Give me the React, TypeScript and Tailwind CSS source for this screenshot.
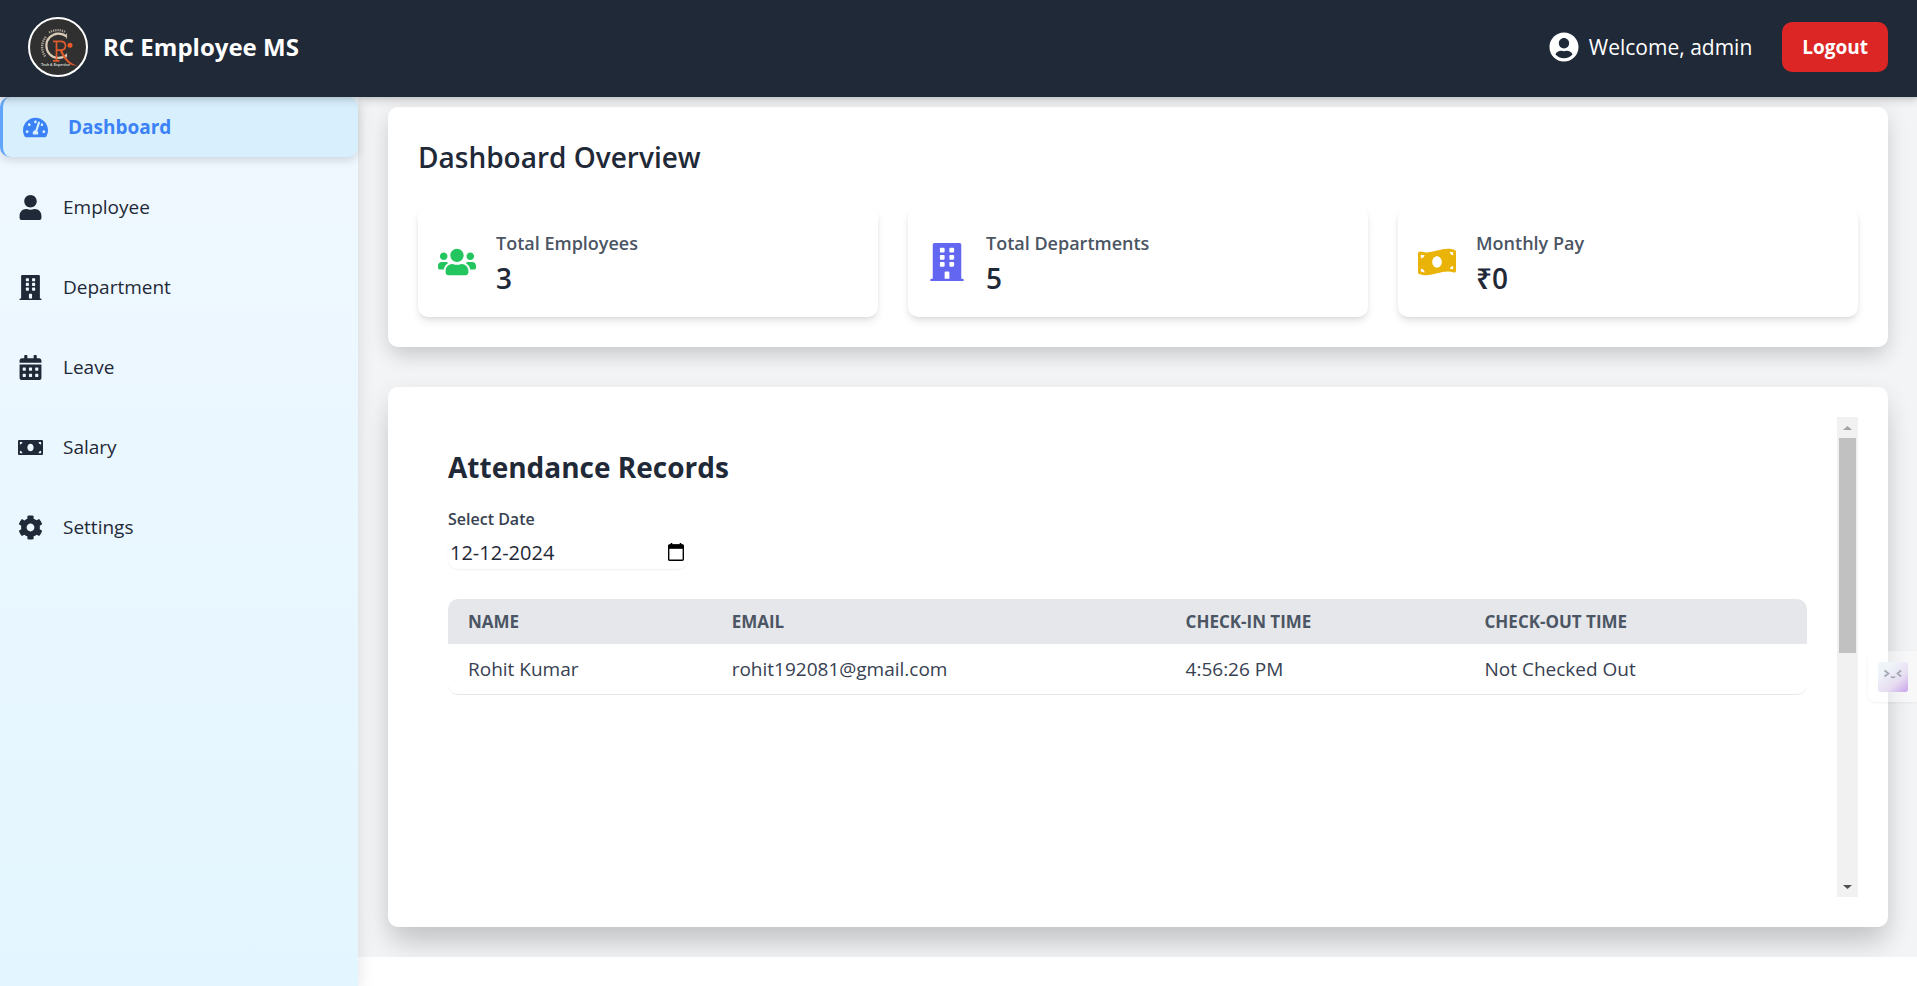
import React from "react";
import type { IconType } from "react-icons";
import {
  FaBuilding,
  FaCalendarAlt,
  FaCog,
  FaMoneyBill,
  FaMoneyBillWave,
  FaTachometerAlt,
  FaUser,
  FaUserCircle,
  FaUsers,
} from "react-icons/fa";

const navItems: { label: string; icon: IconType; active?: boolean }[] = [
  { label: "Dashboard", icon: FaTachometerAlt, active: true },
  { label: "Employee", icon: FaUser },
  { label: "Department", icon: FaBuilding },
  { label: "Leave", icon: FaCalendarAlt },
  { label: "Salary", icon: FaMoneyBill },
  { label: "Settings", icon: FaCog },
];

const stats: { label: string; value: string; icon: IconType; color: string }[] = [
  { label: "Total Employees", value: "3", icon: FaUsers, color: "text-[#22c55e]" },
  { label: "Total Departments", value: "5", icon: FaBuilding, color: "text-[#6366f1]" },
  { label: "Monthly Pay", value: "₹0", icon: FaMoneyBillWave, color: "text-[#eab308]" },
];

const records = [
  { name: "Rohit Kumar", email: "rohit192081@gmail.com", checkIn: "4:56:26 PM", checkOut: "Not Checked Out" },
];

function Logo() {
  return (
    <svg viewBox="0 0 60 60" className="size-[60px] shrink-0" role="img" aria-label="RC logo">
      <circle cx="30" cy="30" r="29" fill="#303030" stroke="#fff" strokeWidth="2" />
      <path d="M38.500 19.500A12.200 12.200 0 1 0 38.500 38" fill="none" stroke="#d9cbb8" strokeWidth="2.200" />
      <path d="M38.600 16.500V21.500M38.600 36.500V40.500" stroke="#d9cbb8" strokeWidth="0.900" />
      <path d="M17.200 39.500A15.800 15.800 0 0 1 18.200 19.500" fill="none" stroke="#a89e90" strokeWidth="2.400" strokeDasharray="1.300 0.900" />
      <path d="M21 15.600A17 17 0 0 1 37.500 15" fill="none" stroke="#a89e90" strokeWidth="2.400" strokeDasharray="1.300 0.900" />
      <path
        d="M25 24.300H32.500C36 24.300 37.500 26.200 37.500 28.800S36 33.200 32.500 33.200H29M28.500 24.300V43.500M25 43.800H31.500"
        fill="none"
        stroke="#df5b2c"
        strokeWidth="1.700"
      />
      <path d="M31.500 33L34 33C37.500 41 42 47 49.500 48.400C42 49.800 36 43.500 31.500 33Z" fill="#df5b2c" />
      <circle cx="42" cy="28.200" r="2.500" fill="#ea5a26" />
      <text x="13" y="49.300" fontSize="3.600" fontWeight="700" fill="#d6d6d6" fontFamily="Liberation Sans, sans-serif">
        Tech &amp; Expertise
      </text>
    </svg>
  );
}

function Header() {
  return (
    <header className="relative z-10 flex items-center justify-between bg-[#1f2937] pt-[17px] pr-[29px] pb-5 pl-7 text-white shadow-[0_5px_8px_rgba(0,0,0,0.1),0_2px_4px_rgba(0,0,0,0.1)]">
      <div className="flex items-center gap-[15px]">
        <Logo />
        <h1 className="text-[24px] leading-8 font-bold">RC Employee MS</h1>
      </div>
      <div className="flex items-center gap-[30px]">
        <div className="flex items-center gap-2.5">
          <FaUserCircle className="size-[30px]" />
          <span className="text-[21px] leading-8">Welcome, admin</span>
        </div>
        <button type="button" className="h-[50px] rounded-[10px] bg-[#dc2626] px-5 text-[19px] font-bold">
          Logout
        </button>
      </div>
    </header>
  );
}

function Sidebar() {
  return (
    <aside className="z-[1] w-[358px] shrink-0 bg-linear-to-b from-[#f0f8ff] to-[#e3f6ff] shadow-[0_4px_16px_rgba(0,0,0,0.12)]">
      <nav className="flex flex-col gap-5">
        {navItems.map(({ label, icon: Icon, active }) => (
          <a
            key={label}
            href={"#" + label.toLowerCase()}
            className={
              active
                ? "flex h-[60px] items-center gap-5 rounded-[10px] border-l-[3px] border-[#60a5fa] bg-[#d8effe] pl-5 text-[19px] font-bold text-[#3b82f6] shadow-[0_4px_8px_rgba(0,0,0,0.12)]"
                : "flex h-[60px] items-center gap-5 rounded-[10px] pl-[18px] text-[19px] text-[#1f2937]"
            }
          >
            <Icon className="size-[25px]" />
            {label}
          </a>
        ))}
      </nav>
    </aside>
  );
}

function Overview() {
  return (
    <section className="rounded-[10px] bg-white p-[30px] shadow-[0_12px_19px_-4px_rgba(0,0,0,0.1),0_5px_24px_rgba(0,0,0,0.1)]">
      <h2 className="mb-[30px] text-[28px] leading-10 font-semibold text-[#1f2937]">Dashboard Overview</h2>
      <div className="grid grid-cols-3 gap-[30px]">
        {stats.map(({ label, value, icon: Icon, color }) => (
          <div
            key={label}
            className="flex h-[110px] items-center gap-5 rounded-[10px] bg-white px-5 shadow-[0_5px_8px_-1px_rgba(0,0,0,0.1),0_2px_5px_-2px_rgba(0,0,0,0.1)]"
          >
            <Icon className={"size-[38px] " + color} />
            <div className="pb-0.5">
              <h3 className="text-[18px] leading-[35px] font-semibold text-[#4b5563]">{label}</h3>
              <p className="text-[28px] leading-[35px] font-semibold text-[#1f2937]">{value}</p>
            </div>
          </div>
        ))}
      </div>
    </section>
  );
}

function ScrollTrack() {
  return (
    <div className="flex w-[21px] shrink-0 flex-col items-center bg-[#f1f1f1]" aria-hidden="true">
      <div className="flex h-[21px] items-center">
        <svg viewBox="0 0 9 4" className="h-1 w-[9px]">
          <path d="M4.500 0L9 4H0Z" fill="#a3a3a3" />
        </svg>
      </div>
      <div className="flex w-[17px] grow flex-col">
        <div className="h-[49%] bg-[#c1c1c1]" />
      </div>
      <div className="flex h-[21px] items-center">
        <svg viewBox="0 0 9 4" className="h-1 w-[9px]">
          <path d="M0 0H9L4.500 4Z" fill="#505050" />
        </svg>
      </div>
    </div>
  );
}

function Attendance() {
  return (
    <section className="rounded-[10px] bg-white p-[30px] shadow-[0_25px_32px_-6px_rgba(0,0,0,0.1),0_10px_24px_rgba(0,0,0,0.12)]">
      <div className="flex min-h-[480px]">
        <div className="min-w-0 grow p-[30px]">
          <h2 className="mb-5 text-[28px] leading-10 font-bold text-[#1f2937]">Attendance Records</h2>
          <label htmlFor="attendance-date" className="block text-[16px] leading-[25px] font-semibold text-[#374151]">
            Select Date
          </label>
          <div className="mt-1 flex h-[33px] w-60 items-center rounded-[10px] bg-white pr-1 pl-0.5 shadow-[0_1px_2px_rgba(0,0,0,0.06)]">
            <input
              id="attendance-date"
              type="text"
              defaultValue="12-12-2024"
              className="w-0 grow bg-transparent text-[20px] text-[#1f2937] outline-none"
            />
            <button type="button" aria-label="Open calendar" className="mb-0.5">
              <svg viewBox="0 0 16 18" className="h-[18px] w-4">
                <path d="M3.500 0V2M12.500 0V2" stroke="#000" strokeWidth="1.600" />
                <rect x="0.700" y="2" width="14.600" height="15.200" rx="1" fill="none" stroke="#000" strokeWidth="1.400" />
                <rect x="0.700" y="1.500" width="14.600" height="4.300" fill="#000" />
              </svg>
            </button>
          </div>
          <div className="mt-[30px] overflow-hidden rounded-[10px] border-b border-[#e5e7eb]">
            <table className="w-full table-fixed text-left">
              <colgroup>
                <col className="w-[19.4%]" />
                <col className="w-[33.4%]" />
                <col className="w-[22%]" />
                <col className="w-[25.2%]" />
              </colgroup>
              <thead className="bg-[#e5e7eb] text-[17px] text-[#4b5563]">
                <tr className="h-[45px]">
                  <th className="px-5 font-bold">NAME</th>
                  <th className="px-5 font-bold">EMAIL</th>
                  <th className="px-5 font-bold">CHECK-IN TIME</th>
                  <th className="px-5 font-bold">CHECK-OUT TIME</th>
                </tr>
              </thead>
              <tbody className="text-[19px] text-[#374151]">
                {records.map((r) => (
                  <tr key={r.email} className="h-[50px]">
                    <td className="px-5">{r.name}</td>
                    <td className="px-5">{r.email}</td>
                    <td className="px-5">{r.checkIn}</td>
                    <td className="px-5">{r.checkOut}</td>
                  </tr>
                ))}
              </tbody>
            </table>
          </div>
        </div>
        <ScrollTrack />
      </div>
    </section>
  );
}

function AssistantTab() {
  return (
    <button
      type="button"
      aria-label="Open assistant"
      className="fixed top-[651px] right-0 z-20 flex h-[51px] w-[49px] items-center rounded-l-[8px] bg-white/40 pl-2.5 shadow-[0_1px_3px_rgba(0,0,0,0.06)]"
    >
      <svg viewBox="0 0 30 30" className="size-[30px]">
        <defs>
          <linearGradient id="tab-fill" x1="0.300" y1="0.200" x2="1" y2="1">
            <stop offset="0" stopColor="#eff4f9" />
            <stop offset="0.550" stopColor="#e6dcf1" />
            <stop offset="1" stopColor="#c9a2ea" />
          </linearGradient>
        </defs>
        <rect width="30" height="30" rx="3" fill="url(#tab-fill)" />
        <path d="M6.500 8.500L10.500 11.500L6.500 14.500M23 8.500L19.500 11.500L23 14.500M13 14.500Q15 16.500 17 14.500" fill="none" stroke="#a0a6b2" strokeWidth="1.700" />
      </svg>
    </button>
  );
}

export default function App() {
  return (
    <div className="flex min-h-screen flex-col bg-white font-['Open_Sans','Noto_Sans',sans-serif]">
      <Header />
      <div className="flex grow">
        <Sidebar />
        <div className="min-w-0 grow">
          <main className="flex flex-col gap-10 overflow-hidden bg-[#f3f4f6] pt-2.5 pr-[29px] pb-[30px] pl-[30px]">
            <Overview />
            <Attendance />
          </main>
        </div>
      </div>
      <AssistantTab />
    </div>
  );
}
